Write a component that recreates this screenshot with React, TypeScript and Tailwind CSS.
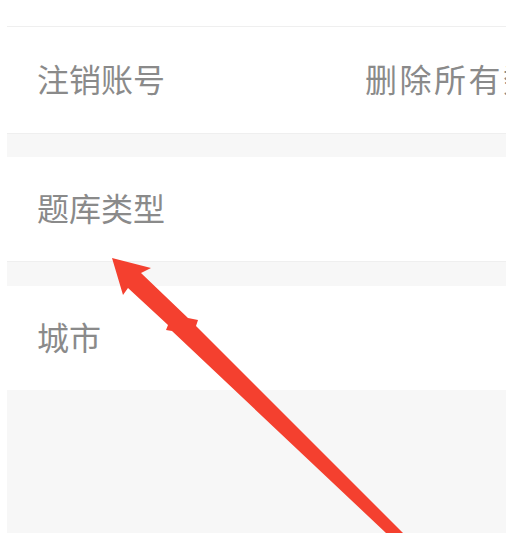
import React from "react";

export default function App() {
  const font = { fontFamily: '"Noto Sans CJK SC", "Noto Sans", sans-serif' };
  return (
    <div className="relative w-[524px] h-[533px] bg-white overflow-hidden" style={font}>
      <div className="ml-[7px] w-[499px] h-[533px] bg-[#f7f7f7] flex flex-col">
        <div className="h-[27px] bg-white border-b border-[#efefef]" />
        <div className="h-[107px] bg-white border-b border-[#efefef] flex items-center pl-[30px] pb-[5px] overflow-hidden whitespace-nowrap">
          <span className="w-[328px] shrink-0 text-[32px] leading-none text-[#8a8a8a]">注销账号</span>
          <span className="shrink-0 text-[32px] leading-none tracking-[2.5px] text-[#8a8a8a]">删除所有数据</span>
        </div>
        <div className="h-[23px]" />
        <div className="h-[105px] bg-white border-b border-[#efefef] flex items-center pl-[30px] pb-[5px]">
          <span className="text-[32px] leading-none text-[#8a8a8a]">题库类型</span>
        </div>
        <div className="h-[24px]" />
        <div className="h-[104px] bg-white flex items-center pl-[30px] pb-[5px]">
          <span className="text-[32px] leading-none text-[#8a8a8a]">城市</span>
        </div>
        <div className="flex-1" />
      </div>
      <svg className="absolute left-0 top-0" width="524" height="533" viewBox="0 0 524 533">
        <polygon
          fill="#f4402f"
          points="112,258 151,268 141,273 188,318 198,320 196,326 403,533 386,533 172,331 166,330 168,325 128,288 123,295"
        />
      </svg>
    </div>
  );
}
